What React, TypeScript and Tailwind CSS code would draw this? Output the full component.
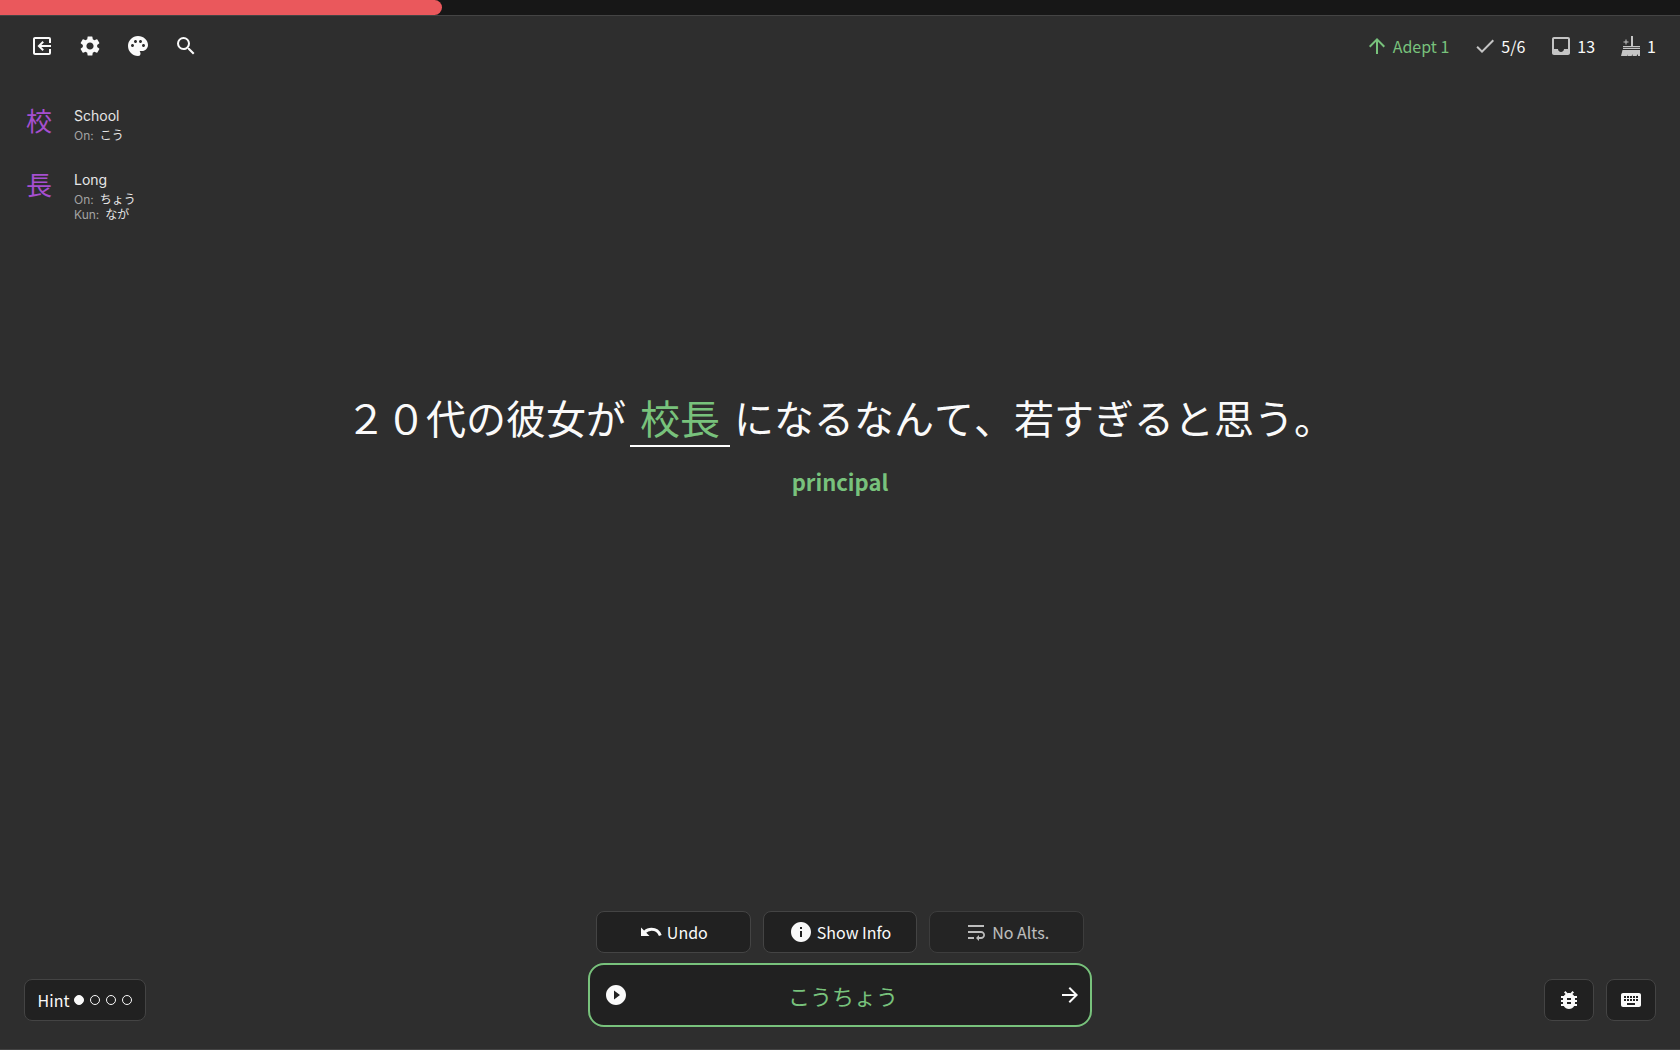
import React from "react";
import {
  MdArrowForward,
  MdArrowUpward,
  MdBugReport,
  MdCheck,
  MdExitToApp,
  MdInbox,
  MdInfo,
  MdKeyboard,
  MdPalette,
  MdPlayCircleFilled,
  MdSearch,
  MdSettings,
  MdWrapText,
} from "react-icons/md";

const kanjiList = [
  { kanji: "校", meaning: "School", readings: [{ type: "On:", kana: "こう" }] },
  {
    kanji: "長",
    meaning: "Long",
    readings: [
      { type: "On:", kana: "ちょう" },
      { type: "Kun:", kana: "なが" },
    ],
  },
];

const boxButton =
  "flex items-center justify-center rounded-lg border border-[#444444] bg-[#212121]";

function BroomIcon() {
  return (
    <svg viewBox="0 0 24 24" className="size-6" fill="currentColor" aria-hidden="true">
      <path d="M12 2h2v10h-2z" />
      <path d="M6.500 5.500h1v2h2v1h-2v2h-1v-2h-2v-1h2z" />
      <path d="M4 12h17v1.200H4zM4 14h17v1H4z" />
      <path d="M3.500 16H21v6h-2v-2l-1.500 2h-4l.5-2-1.500 2h-4l.7-2L8 22H2z" />
    </svg>
  );
}

function UndoIcon() {
  return (
    <svg viewBox="0 0 24 24" className="size-6" fill="currentColor" aria-hidden="true">
      <path d="M2 7.500V16h8.500z" />
      <path d="M5.500 12.200C7.500 10.300 9.800 9.300 12.500 9.300c4.100 0 7.500 2.600 8.800 6.300" fill="none" stroke="currentColor" strokeWidth="2.900" />
    </svg>
  );
}

export default function App() {
  return (
    <div
      lang="ja"
      className="flex min-h-screen flex-col border-b border-[#444444] bg-[#2e2e2e] text-base text-[#fafafa]"
      style={{ fontFamily: '"Noto Sans CJK JP", sans-serif' }}
    >
      <div className="h-4 border-b border-[#444444] bg-[#171717]">
        <div className="h-full w-[26.3%] rounded-r-lg bg-[#ea585c]" />
      </div>

      <header className="flex items-center justify-between pt-3.5 pr-6 pl-[18px]">
        <nav className="flex">
          <button aria-label="Exit" className="flex w-12 justify-center px-1 py-1">
            <MdExitToApp className="size-6 -scale-x-100" />
          </button>
          <button aria-label="Settings" className="flex w-12 justify-center px-1 py-1">
            <MdSettings className="size-6" />
          </button>
          <button aria-label="Theme" className="flex w-12 justify-center px-1 py-1">
            <MdPalette className="size-6" />
          </button>
          <button aria-label="Search" className="flex w-12 justify-center px-1 py-1">
            <MdSearch className="size-6" />
          </button>
        </nav>
        <div className="flex items-center gap-6 leading-6">
          <div className="flex gap-1 text-[#78c27c]">
            <MdArrowUpward className="size-6" />
            <span>Adept 1</span>
          </div>
          <div className="flex gap-1">
            <MdCheck className="size-6 text-[#c4c4c4]" />
            <span>5/6</span>
          </div>
          <div className="flex gap-1">
            <MdInbox className="size-6 text-[#c4c4c4]" />
            <span>13</span>
          </div>
          <div className="flex gap-1">
            <span className="text-[#c4c4c4]">
              <BroomIcon />
            </span>
            <span>1</span>
          </div>
        </div>
      </header>

      <main className="flex flex-1 flex-col px-6">
        <ul className="flex h-64 flex-col gap-[25px] pt-[42px] pl-0.5">
          {kanjiList.map((item) => (
            <li key={item.kanji} className="flex gap-5">
              <span className="w-7 text-[26px] leading-8 text-[#a64fd0]">{item.kanji}</span>
              <div style={{ fontFamily: 'Inter, "Noto Sans CJK JP", sans-serif' }}>
                <p className="text-sm leading-6 text-[#e6e6e6]">{item.meaning}</p>
                {item.readings.map((reading) => (
                  <p key={reading.type} className="flex gap-1.5 text-xs leading-[15px]">
                    <span className="text-[#a3a3a3]">{reading.type}</span>
                    <span className="text-[#e6e6e6]">{reading.kana}</span>
                  </p>
                ))}
              </div>
            </li>
          ))}
        </ul>

        <section className="flex flex-1 flex-col items-center pt-18 text-center">
          <h1 className="text-[40px] leading-[55px] [font-kerning:none]">
            ２０代の彼女が
            <span className="mx-1 inline-block border-b-2 border-white px-2.5 text-[#78c27c]">校長</span>
            になるなんて、若すぎると思う。
          </h1>
          <p className="mt-[18px] text-[22px] leading-8 font-bold text-[#78c27c]">principal</p>
        </section>
      </main>

      <footer className="grid grid-cols-[1fr_504px_1fr] items-end px-6 pb-[22px]">
        <button className={`${boxButton} mb-1.5 h-[42px] w-[122px] gap-[5px]`}>
          Hint
          <span className="flex gap-1.5">
            <span className="size-2.5 rounded-full border border-[#fafafa] bg-[#fafafa]" />
            <span className="size-2.5 rounded-full border border-[#fafafa]" />
            <span className="size-2.5 rounded-full border border-[#fafafa]" />
            <span className="size-2.5 rounded-full border border-[#fafafa]" />
          </span>
        </button>

        <div>
          <div className="grid grid-cols-3 gap-3 px-2">
            <button className={`${boxButton} h-[42px] gap-1`}>
              <UndoIcon />
              Undo
            </button>
            <button className={`${boxButton} h-[42px] gap-1`}>
              <MdInfo className="size-6" />
              Show Info
            </button>
            <button disabled className={`${boxButton} h-[42px] gap-1 opacity-70`}>
              <MdWrapText className="size-6" />
              No Alts.
            </button>
          </div>
          <div className="mt-2.5 flex h-16 items-center rounded-2xl border-2 border-[#78c27c] bg-[#212121] pr-2 pl-3.5">
            <button aria-label="Play audio">
              <MdPlayCircleFilled className="size-6" />
            </button>
            <input
              aria-label="Answer"
              defaultValue="こうちょう"
              className="min-w-0 flex-1 text-center text-[22px] text-[#78c27c] outline-none"
            />
            <button aria-label="Next">
              <MdArrowForward className="size-6" />
            </button>
          </div>
        </div>

        <div className="mb-1.5 flex justify-end gap-3">
          <button aria-label="Report a bug" className={`${boxButton} h-[42px] w-[50px]`}>
            <MdBugReport className="size-6" />
          </button>
          <button aria-label="Keyboard shortcuts" className={`${boxButton} h-[42px] w-[50px]`}>
            <MdKeyboard className="size-6" />
          </button>
        </div>
      </footer>
    </div>
  );
}
